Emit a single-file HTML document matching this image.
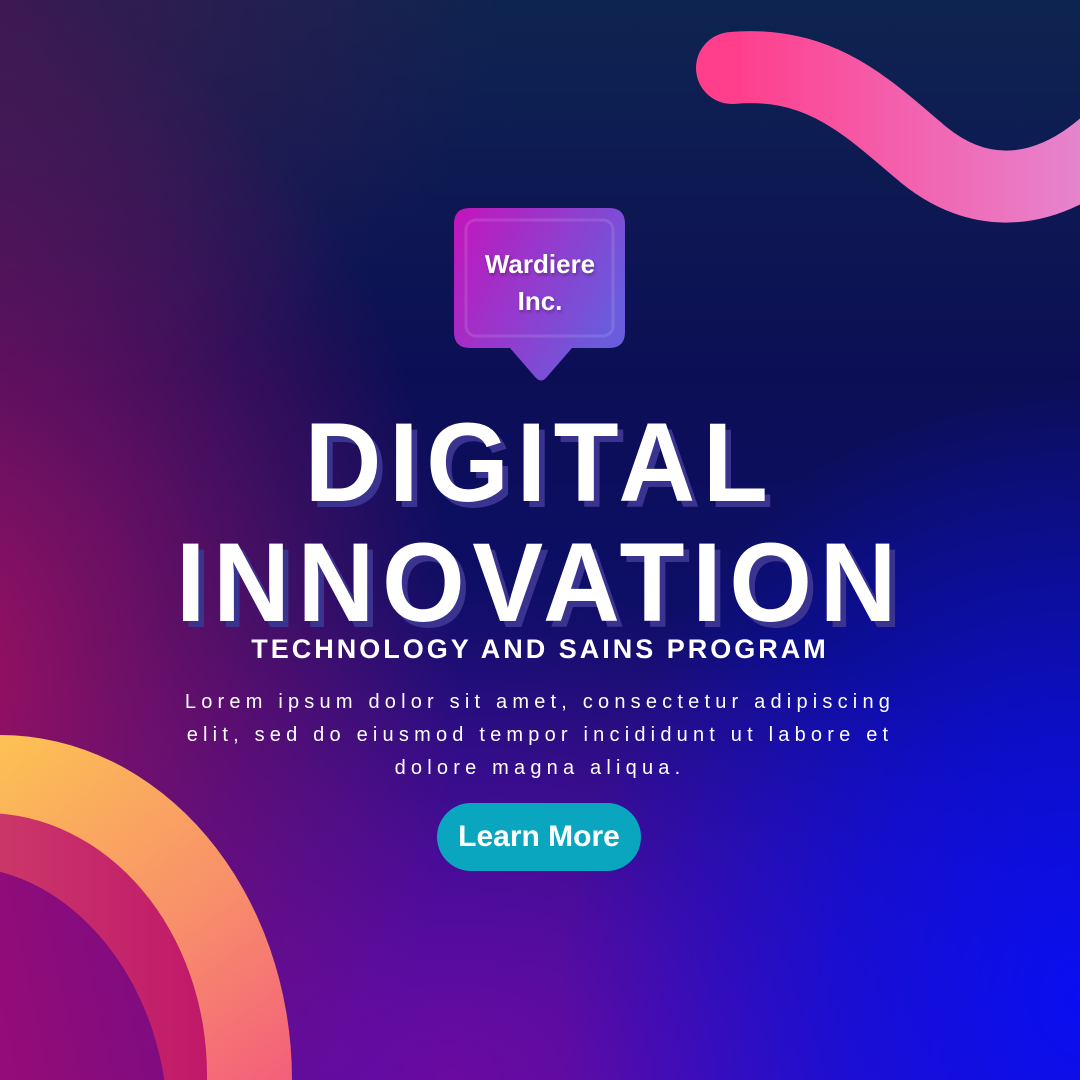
<!DOCTYPE html>
<html><head><meta charset="utf-8"><style>
html,body{margin:0;padding:0}
body{width:1080px;height:1080px;overflow:hidden;position:relative;font-family:"Liberation Sans",sans-serif;
background:
radial-gradient(ellipse 520px 620px at 1080px 1000px,#0a0ef0 0%,rgba(10,14,230,.7) 45%,rgba(10,14,200,0) 100%),
radial-gradient(ellipse 520px 700px at -60px 680px,#a01060 0%,rgba(140,16,100,.7) 40%,rgba(100,16,110,0) 100%),
radial-gradient(ellipse 700px 500px at 450px 1080px,#6a0aa0 0%,rgba(90,10,160,0) 100%),
radial-gradient(ellipse 500px 400px at 0px 0px,#3a1a50 0%,rgba(40,20,80,0) 100%),
linear-gradient(180deg,#0e2450 0%,#0c0e55 35%,#0d0e6a 60%,#2a10b0 100%);}
.c{position:absolute;left:0;width:1080px;text-align:center;color:#fff}
.big{font-weight:700;font-size:112px;letter-spacing:8px;line-height:1;text-shadow:6px 6px 0 #3a3490;transform:scaleX(0.95)}
</style></head><body>
<svg width="1080" height="1080" style="position:absolute;left:0;top:0">
<defs>
<linearGradient id="sw" x1="0" x2="1"><stop offset="0" stop-color="#ff3e8c"/><stop offset="1" stop-color="#e48ad4"/></linearGradient>
<linearGradient id="ring" x1="0" y1="0" x2="0.6" y2="1"><stop offset="0" stop-color="#ffe444"/><stop offset=".55" stop-color="#f8906a"/><stop offset="1" stop-color="#f03a88"/></linearGradient>
<linearGradient id="wall" x1="0" x2="1"><stop offset="0" stop-color="#d85a68"/><stop offset="1" stop-color="#c0186a"/></linearGradient>
<linearGradient id="hole" x1="0" x2="1"><stop offset="0" stop-color="#b00c6c"/><stop offset="1" stop-color="#800c80"/></linearGradient>
<linearGradient id="bub" x1="0" x2="1" y1="0" y2=".5"><stop offset="0" stop-color="#c414bc"/><stop offset="1" stop-color="#6a5cdc"/></linearGradient>
</defs>
<path d="M732,68 C820,60 868,108 918,150 C980,205 1050,195 1110,140" fill="none" stroke="url(#sw)" stroke-width="72" stroke-linecap="round"/>
<ellipse cx="0" cy="1080" rx="292" ry="345" fill="url(#ring)"/>
<ellipse cx="-15" cy="1075" rx="222" ry="262" fill="url(#wall)"/>
<ellipse cx="-20" cy="1100" rx="185" ry="235" transform="rotate(-12 -20 1100)" fill="url(#hole)"/>
<path d="M470,208 H609 Q625,208 625,224 V332 Q625,348 609,348 H572 L546,378 Q541,383 536,378 L510,348 H470 Q454,348 454,332 V224 Q454,208 470,208 Z" fill="url(#bub)"/>
<rect x="466" y="220" width="147" height="116" rx="10" fill="none" stroke="rgba(255,255,255,.12)" stroke-width="3"/>
</svg>
<div class="c" style="top:246px;font-weight:700;font-size:26px;line-height:37px;text-shadow:1px 2px 3px rgba(0,0,0,.3)">Wardiere<br>Inc.</div>
<div class="c big" style="top:407px">DIGITAL</div>
<div class="c big" style="top:527px">INNOVATION</div>
<div class="c" style="top:634px;font-weight:700;font-size:27px;letter-spacing:3px">TECHNOLOGY AND SAINS PROGRAM</div>
<div class="c" style="top:686px;font-size:20px;letter-spacing:5.2px;line-height:33px">Lorem ipsum dolor sit amet, consectetur adipiscing<br>elit, sed do eiusmod tempor incididunt ut labore et<br>dolore magna aliqua.</div>
<div style="position:absolute;left:437px;top:803px;width:204px;height:68px;border-radius:34px;background:#0aa6c0;color:#fff;font-weight:700;font-size:30px;line-height:68px;text-align:center">Learn More</div>
</body></html>
